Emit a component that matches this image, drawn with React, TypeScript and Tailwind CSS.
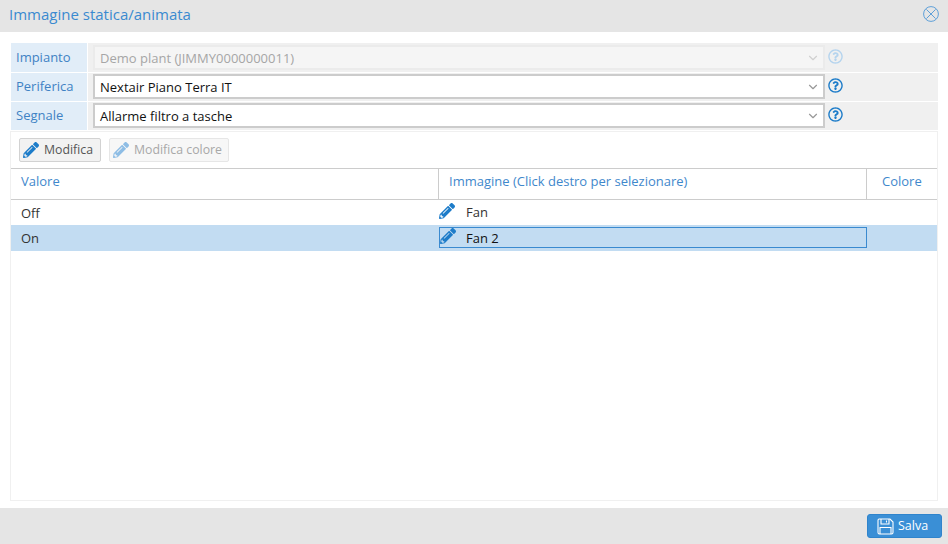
import React from 'react';
import { FaPencilAlt, FaRegQuestionCircle } from 'react-icons/fa';
import { ChevronDown } from 'lucide-react';

const FormRow: React.FC<{ label: string; value: string; disabled?: boolean; height: string }> = ({ label, value, disabled, height }) => (
    <div className={`flex gap-px ${height}`}>
        <div className={`w-[76px] bg-[#e1edf8] pl-[5px] text-[#3f82c4] ${disabled ? 'pt-[5px]' : 'pt-[4px]'}`}>{label}</div>
        <div className={`flex flex-1 items-start bg-[#f0f0f0] pl-[5px] ${disabled ? 'pt-[2px]' : 'pt-[1px]'}`}>
            <div
                className={`flex h-[25px] w-[732px] items-center justify-between border-2 pl-[5px] pr-[3px] ${
                    disabled ? 'border-[#ebebeb] bg-[#f5f5f5] text-[#a6a6a6]' : 'border-[#cccccc] bg-white text-[#111111]'
                }`}
            >
                <span>{value}</span>
                <ChevronDown size={14} className={disabled ? 'text-[#d0d0d0]' : 'text-[#999999]'} />
            </div>
            <FaRegQuestionCircle size={15} className={`ml-[3px] mt-[4px] ${disabled ? 'text-[#b5d4ee]' : 'text-[#1d7cc9]'}`} />
        </div>
    </div>
);

const SaveIcon = () => (
    <svg width="17" height="17" viewBox="0 0 17 17" fill="none" stroke="currentColor" strokeWidth="1.1">
        <path d="M2 1h11l3 3v10.5a1.5 1.5 0 0 1-1.5 1.5h-12A1.5 1.5 0 0 1 1 14.5v-12A1.5 1.5 0 0 1 2 1z" />
        <path d="M4 1v5h8V1" />
        <path d="M9.5 2.5v2" />
        <path d="M3 16V9.5h11V16" />
    </svg>
);

const CloseIcon = () => (
    <svg width="16" height="16" viewBox="0 0 16 16" fill="none" stroke="#5fa0d8" strokeWidth="1">
        <circle cx="8" cy="8" r="7.4" />
        <path d="M3.4 3.4l9.2 9.2M12.6 3.4l-9.2 9.2" />
    </svg>
);

export default function App() {
    return (
        <div className="flex h-[544px] w-[948px] flex-col bg-white font-['Open_Sans',sans-serif] text-[13px] leading-[18px]">
            <header className="flex h-[32px] items-center justify-between bg-[#e5e5e5] pb-[4px] pl-[9px] pr-[9px]">
                <h1 className="text-[15px] text-[#3a8ad0]">Immagine statica/animata</h1>
                <CloseIcon />
            </header>

            <main className="flex flex-1 flex-col px-[10px] pt-[11px]">
                <div className="ml-px flex flex-col gap-px">
                    <FormRow label="Impianto" value="Demo plant (JIMMY0000000011)" disabled height="h-[29px]" />
                    <FormRow label="Periferica" value="Nextair Piano Terra IT" height="h-[28px]" />
                    <FormRow label="Segnale" value="Allarme filtro a tasche" height="h-[28px]" />
                </div>

                <section className="mt-px flex h-[370px] flex-col border border-[#f0f0f0]">
                    <div className="flex h-[36px] items-center gap-[8px] pl-[8px] text-[12.3px]">
                        <button className="flex h-[24px] w-[82px] items-center gap-[5px] rounded-[2px] border border-[#d2d2d2] bg-[#f2f2f2] pl-[3px] text-[#555555]">
                            <FaPencilAlt size={16} className="text-[#1d7cc9]" />
                            Modifica
                        </button>
                        <button className="flex h-[24px] w-[120px] items-center gap-[5px] rounded-[2px] border border-[#e6e6e6] bg-[#f7f7f7] pl-[3px] text-[#a8a8a8]">
                            <FaPencilAlt size={16} className="text-[#8ebde5]" />
                            Modifica colore
                        </button>
                    </div>

                    <div className="flex h-[32px] border-y border-[#cccccc] text-[#3f88cc]">
                        <div className="w-[428px] border-r border-[#cccccc] pl-[10px] pt-[3px]">Valore</div>
                        <div className="w-[428px] border-r border-[#cccccc] pl-[10px] pt-[3px]">Immagine (Click destro per selezionare)</div>
                        <div className="flex-1 pl-[15px] pt-[3px]">Colore</div>
                    </div>

                    <div className="flex h-[25px] items-center text-[#333333]">
                        <div className="w-[428px] pl-[10px]">Off</div>
                        <div className="flex items-center gap-[11px]">
                            <FaPencilAlt size={16} className="mb-[3px] text-[#1d7cc9]" />
                            <span className="mb-px">Fan</span>
                        </div>
                    </div>
                    <div className="flex h-[26px] items-center bg-[#c2dcf2] text-[#333333]">
                        <div className="w-[428px] pl-[10px]">On</div>
                        <div className="mb-px flex h-[21px] w-[428px] items-center gap-[10px] border border-[#3a8ad0] text-[#111111]">
                            <FaPencilAlt size={16} className="mb-[3px] text-[#1d7cc9]" />
                            <span className="mt-px">Fan 2</span>
                        </div>
                    </div>
                </section>
            </main>

            <footer className="flex h-[36px] items-center justify-end bg-[#e5e5e5] pr-[6px]">
                <button className="flex h-[24px] w-[75px] items-center gap-[4px] rounded-[3px] border border-[#2f84cc] bg-[#3a8fd6] pl-[9px] text-[12.5px] text-white">
                    <SaveIcon />
                    Salva
                </button>
            </footer>
        </div>
    );
}
